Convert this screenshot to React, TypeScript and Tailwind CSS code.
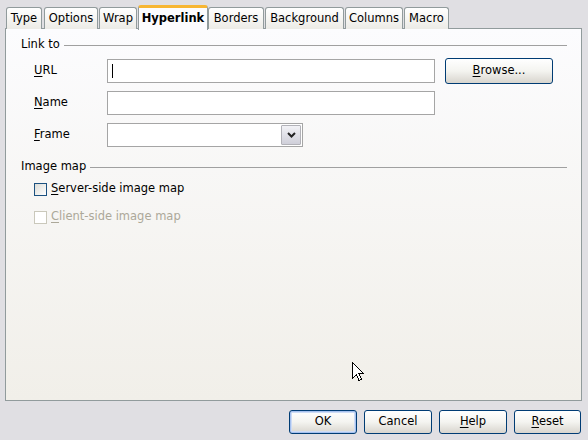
import React from 'react';

const tabs = [
  { label: 'Type', w: 'w-[36px]', ml: 'ml-0' },
  { label: 'Options', w: 'w-[54px]', ml: 'ml-[2px]' },
  { label: 'Wrap', w: 'w-[38px]', ml: 'ml-[1px]' },
  { label: 'Hyperlink', w: 'w-[70px]', ml: 'ml-[1px]', active: true },
  { label: 'Borders', w: 'w-[56px]', ml: 'ml-0' },
  { label: 'Background', w: 'w-[79px]', ml: 'ml-[1px]' },
  { label: 'Columns', w: 'w-[58px]', ml: 'ml-[1px]' },
  { label: 'Macro', w: 'w-[45px]', ml: 'ml-[1px]' },
];

function Mn({ k, rest }: { k: string; rest: string }) {
  return (
    <span>
      <span className="underline underline-offset-2">{k}</span>
      {rest}
    </span>
  );
}

function XpButton({ children, w, def }: { children: React.ReactNode; w: string; def?: boolean }) {
  return (
    <button
      className={`${w} h-[24px] rounded-[3px] border border-[#003c74] bg-gradient-to-b from-white via-[#f4f4f0] to-[#d8d5ce] text-black text-[11.5px] flex items-center justify-center ${
        def ? 'shadow-[inset_0_0_0_1px_#a6c1ef,inset_0_0_0_2px_#cedcf5]' : ''
      }`}
    >
      {children}
    </button>
  );
}

function Checkbox({ disabled }: { disabled?: boolean }) {
  return (
    <div
      className={`w-[13px] h-[13px] border ${
        disabled ? 'border-[#cac8bb] bg-white' : 'border-[#1c5180] bg-gradient-to-br from-[#dcdcd7] to-white'
      }`}
    />
  );
}

function Group({ title }: { title: string }) {
  return (
    <div className="h-[14px] flex items-center pl-[15px] pr-[14px]">
      <span className="text-black leading-none">{title}</span>
      <div className="flex-1 h-px bg-[#a0a0a0] ml-[4px]" />
    </div>
  );
}

export default function App() {
  return (
    <div
      className="w-[588px] h-[440px] bg-[#e0dfe3] relative overflow-hidden text-[11.5px] text-black select-none"
      style={{ fontFamily: '"DejaVu Sans", Verdana, sans-serif' }}
    >
      <div className="h-[29px] flex items-end pl-[6px]">
        {tabs.map((t) =>
          t.active ? (
            <div
              key={t.label}
              className={`${t.w} ${t.ml} relative z-10 h-[25px] -mb-px bg-[#fcfcfe] border-x border-[#919b9c] border-t-[3px] border-t-[#f7b633] rounded-t-[3px] flex items-center justify-center font-bold pb-[1px]`}
            >
              {t.label}
            </div>
          ) : (
            <div
              key={t.label}
              className={`${t.w} ${t.ml} h-[22px] border border-b-0 border-[#919b9c] rounded-t-[3px] bg-gradient-to-b from-white to-[#ecebe6] flex items-center justify-center`}
            >
              {t.label}
            </div>
          )
        )}
      </div>

      <div className="-mt-px ml-[5px] w-[577px] h-[373px] border border-[#919b9c] bg-gradient-to-b from-[#fcfcfe] to-[#f1efe9] flex flex-col">
        <div className="mt-[9px]">
          <Group title="Link to" />
        </div>

        <div className="mt-[7px] flex flex-col gap-[8px] pl-[28px]">
          <div className="h-[24px] flex items-center">
            <div className="w-[73px]">
              <Mn k="U" rest="RL" />
            </div>
            <div className="w-[328px] h-[24px] border border-[#a5a5a5] bg-white flex items-center pl-[4px]">
              <div className="w-px h-[14px] bg-black" />
            </div>
            <div className="ml-[10px]">
              <XpButton w="w-[108px] !h-[26px]">
                <Mn k="B" rest="rowse..." />
              </XpButton>
            </div>
          </div>
          <div className="h-[24px] flex items-center">
            <div className="w-[73px]">
              <Mn k="N" rest="ame" />
            </div>
            <div className="w-[328px] h-[24px] border border-[#a5a5a5] bg-white" />
          </div>
          <div className="h-[24px] flex items-center">
            <div className="w-[73px]">
              <Mn k="F" rest="rame" />
            </div>
            <div className="w-[196px] h-[24px] border border-[#a5a5a5] bg-white flex items-center justify-end pr-[1px]">
              <div className="w-[20px] h-[20px] border border-[#b2b2b8] rounded-[1px] bg-gradient-to-b from-[#f2f2f6] to-[#cfcfd9] flex items-center justify-center">
                <svg width="9" height="6" viewBox="0 0 9 6">
                  <path d="M1 1 L4.5 4.5 L8 1" fill="none" stroke="#222" strokeWidth="2" />
                </svg>
              </div>
            </div>
          </div>
        </div>

        <div className="mt-[13px]">
          <Group title="Image map" />
        </div>

        <div className="mt-[5px] pl-[28px] h-[20px] flex items-center gap-[4px]">
          <Checkbox />
          <Mn k="S" rest="erver-side image map" />
        </div>
        <div className="mt-[8px] pl-[28px] h-[20px] flex items-center gap-[4px] text-[#aca899]">
          <Checkbox disabled />
          <Mn k="C" rest="lient-side image map" />
        </div>
      </div>

      <div className="mt-[9px] pr-[7px] flex justify-end gap-[7px]">
        <XpButton w="w-[68px]" def>
          OK
        </XpButton>
        <XpButton w="w-[68px]">Cancel</XpButton>
        <XpButton w="w-[68px]">
          <Mn k="H" rest="elp" />
        </XpButton>
        <XpButton w="w-[67px]">
          <Mn k="R" rest="eset" />
        </XpButton>
      </div>

      <svg className="absolute left-[352px] top-[362px]" width="12" height="20" viewBox="0 0 12 20">
        <path
          d="M0.5 0.5 L0.5 16.5 L4.5 12.5 L7 18.5 L9.5 17.5 L7 11.5 L11.5 11.5 Z"
          fill="white"
          stroke="black"
          strokeWidth="1"
          shapeRendering="crispEdges"
        />
      </svg>
    </div>
  );
}
